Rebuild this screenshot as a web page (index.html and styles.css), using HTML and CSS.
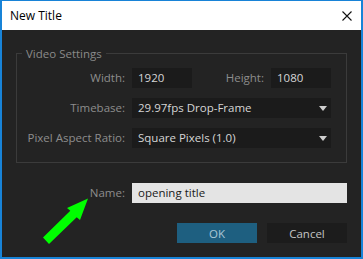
FILE: index.html
```html
<!DOCTYPE html>
<html lang="en">
<head>
    <meta charset="UTF-8">
    <title>New Title</title>
    <link rel="stylesheet" href="styles.css">
</head>
<body>
    <div class="window">
        <div class="titlebar">
            <span class="caption">New Title</span>
            <svg class="close" width="10" height="10" viewBox="0 0 10 10">
                <path d="M0.5 0.5 L9.5 9.5 M9.5 0.5 L0.5 9.5" stroke="#111" stroke-width="1.1" fill="none"/>
            </svg>
        </div>

        <div class="content">
            <fieldset class="settings">
                <legend>Video Settings</legend>
                <div class="grid">
                    <label class="lbl">Width:</label>
                    <div class="field">1920</div>
                    <label class="lbl">Height:</label>
                    <div class="field">1080</div>

                    <label class="lbl">Timebase:</label>
                    <div class="field dropdown wide">29.97fps Drop-Frame <span class="caret"></span></div>

                    <label class="lbl">Pixel Aspect Ratio:</label>
                    <div class="field dropdown wide">Square Pixels (1.0) <span class="caret"></span></div>
                </div>
            </fieldset>

            <div class="name-row">
                <label class="lbl">Name:</label>
                <div class="name-input">opening title</div>
            </div>

            <div class="buttons">
                <button class="btn ok">OK</button>
                <button class="btn cancel">Cancel</button>
            </div>
        </div>
    </div>

    <!-- pointer arrow drawn over the dialog -->
    <svg class="arrow" width="363" height="259" viewBox="0 0 363 259">
        <polygon points="43,237.5 70.3,210.8 67,208 88,198.5 80,220 76.7,217.2 49,244" fill="#00ff00"/>
    </svg>
</body>
</html>
```

FILE: styles.css
```css
body {
    margin: 0;
    padding: 0;
    font-family: 'Open Sans', 'Noto Sans', sans-serif;
    background: #232323;
}
.window {
    width: 363px;
    height: 259px;
    box-sizing: border-box;
    border: 2px solid #1883d7;
    border-top-width: 1px;
    background-color: #232323;
    display: flex;
    flex-direction: column;
}
.titlebar {
    height: 29px;
    background-color: #fff;
    display: flex;
    align-items: center;
    justify-content: space-between;
    padding: 0 9px 0 8px;
}
.caption {
    font-size: 12px;
    color: #000;
    padding-bottom: 1px;
}
.close {
    display: block;
}
.content {
    padding: 0 14px;
}
.settings {
    margin: 16px 0 0 0;
    padding: 7px 14px 14px 0;
    border: 1px solid #3b3b3b;
    min-width: 0;
}
.settings legend {
    font-size: 11.5px;
    line-height: 15px;
    color: #8a8a8a;
    padding: 0 4px;
    margin-left: 5px;
}
.grid {
    display: grid;
    grid-template-columns: 108px 60px 65px 60px;
    column-gap: 7px;
    row-gap: 10px;
}
.lbl {
    font-size: 11.5px;
    color: #8d8d8d;
    text-align: right;
    line-height: 20px;
    white-space: nowrap;
}
.field {
    height: 20px;
    line-height: 20px;
    background-color: #1b1b1b;
    color: #d6d6d6;
    font-size: 11.5px;
    padding: 0 6px;
    box-sizing: border-box;
}
.wide {
    grid-column: 2 / 5;
}
.dropdown {
    display: flex;
    justify-content: space-between;
    align-items: center;
    padding-right: 4px;
}
.caret {
    width: 0;
    height: 0;
    border-left: 4.5px solid transparent;
    border-right: 4.5px solid transparent;
    border-top: 5px solid #cfcfcf;
}
.name-row {
    display: flex;
    gap: 7px;
    margin-top: 20px;
    padding-left: 1px;
}
.name-row .lbl {
    width: 108px;
    flex: none;
}
.name-input {
    flex: 1;
    height: 20px;
    line-height: 20px;
    background-color: #e4e4e4;
    color: #1a1a1a;
    font-size: 11.5px;
    padding: 0 6px;
}
.buttons {
    display: flex;
    justify-content: flex-end;
    gap: 10px;
    margin-top: 20px;
}
.btn {
    width: 80px;
    height: 20px;
    border: none;
    padding: 0;
    font-family: 'Open Sans', 'Noto Sans', sans-serif;
    font-size: 11.5px;
    cursor: pointer;
}
.ok {
    background-color: #1e5f80;
    color: #a9c6d6;
}
.cancel {
    background-color: #1c1c1c;
    color: #c4c4c4;
}
.arrow {
    position: absolute;
    left: 0;
    top: 0;
    pointer-events: none;
}
```
